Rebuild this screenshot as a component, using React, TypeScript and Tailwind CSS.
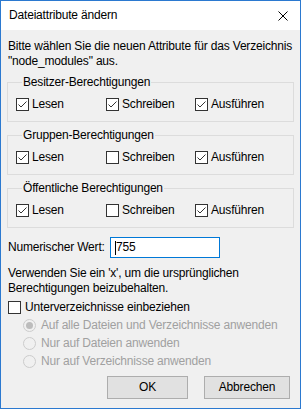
import React from 'react';

function Check({ checked }: { checked: boolean }) {
  return (
    <span className="w-[13px] h-[13px] border border-[#333333] bg-white shrink-0 flex items-center justify-center">
      {checked && (
        <svg width="11" height="11" viewBox="0 0 11 11">
          <polyline points="1.5,5.5 4,8 9.5,2.5" fill="none" stroke="#333333" strokeWidth="1" />
        </svg>
      )}
    </span>
  );
}

function Radio({ selected, label }: { selected?: boolean; label: string }) {
  return (
    <div className="flex items-center gap-[5px] h-[18px] pl-[16px] text-[#a0a0a0]">
      <span className="w-[13px] h-[13px] rounded-full border border-[#cccccc] bg-[#f0f0f0] flex items-center justify-center">
        {selected && <span className="w-[7px] h-[7px] rounded-full bg-[#bcbcbc]" />}
      </span>
      <span>{label}</span>
    </div>
  );
}

function Group({ title, values }: { title: string; values: boolean[] }) {
  const labels = ['Lesen', 'Schreiben', 'Ausführen'];
  return (
    <fieldset className="border border-[#dcdcdc] px-[8px] pt-[7px] pb-[9px]">
      <legend className="ml-[6px] px-[1px] leading-[15px]">{title}</legend>
      <div className="grid grid-cols-[90px_89px_1fr]">
        {labels.map((l, i) => (
          <div key={l} className="flex items-center gap-[3px] h-[15px]">
            <Check checked={values[i]} />
            <span>{l}</span>
          </div>
        ))}
      </div>
    </fieldset>
  );
}

export default function App() {
  return (
    <div
      className="w-[301px] h-[409px] border border-[#2b79d0] bg-[#f0f0f0] flex flex-col text-[12px] leading-[15px] text-black tracking-[-0.18px]"
      style={{ fontFamily: '"Liberation Sans", Arial, sans-serif' }}
    >
      {/* Title bar */}
      <div className="h-[29px] bg-white flex items-center justify-between pl-[8px] pr-[12px] shrink-0">
        <span className="text-[12px]">Dateiattribute ändern</span>
        <svg width="10" height="10" viewBox="0 0 10 10">
          <path d="M0.5 0.5 L9.5 9.5 M9.5 0.5 L0.5 9.5" stroke="#000" strokeWidth="1" />
        </svg>
      </div>

      <div className="flex-1 flex flex-col px-[6px] pt-[9px]">
        <p className="pl-[1px] whitespace-nowrap">
          Bitte wählen Sie die neuen Attribute für das Verzeichnis
          <br />
          "node_modules" aus.
        </p>

        <div className="mt-[6px] flex flex-col gap-[6px]">
          <Group title="Besitzer-Berechtigungen" values={[true, true, true]} />
          <Group title="Gruppen-Berechtigungen" values={[true, false, true]} />
          <Group title="Öffentliche Berechtigungen" values={[true, false, true]} />
        </div>

        <div className="mt-[9px] flex items-center">
          <span className="pl-[1px] w-[103px]">Numerischer Wert:</span>
          <div className="w-[110px] h-[21px] border border-[#0078d7] bg-white flex items-center pl-[4px]">
            <span className="w-[1px] h-[14px] bg-black" />
            <span>755</span>
          </div>
        </div>

        <p className="mt-[8px] pl-[1px] whitespace-nowrap">
          Verwenden Sie ein 'x', um die ursprünglichen
          <br />
          Berechtigungen beizubehalten.
        </p>

        <div className="mt-[4px] flex items-center gap-[4px] h-[15px] pl-[1px]">
          <Check checked={false} />
          <span>Unterverzeichnisse einbeziehen</span>
        </div>

        <div className="mt-[1px] flex flex-col">
          <Radio selected label="Auf alle Dateien und Verzeichnisse anwenden" />
          <Radio label="Nur auf Dateien anwenden" />
          <Radio label="Nur auf Verzeichnisse anwenden" />
        </div>

        <div className="mt-[6px] flex justify-end gap-[16px] pr-[4px]">
          <button className="w-[81px] h-[23px] bg-[#e1e1e1] border border-[#adadad]">OK</button>
          <button className="w-[86px] h-[23px] bg-[#e1e1e1] border border-[#adadad]">Abbrechen</button>
        </div>
      </div>
    </div>
  );
}
